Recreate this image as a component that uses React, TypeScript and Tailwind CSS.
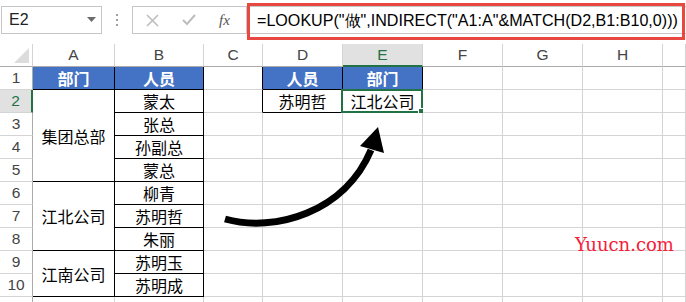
import React from "react";

type Cell = {
  text?: string;
  span?: number;
  blue?: boolean;
  blackR?: boolean;
  blackB?: boolean;
  selected?: boolean;
};

const colLetters = ["A", "B", "C", "D", "E", "F", "G", "H", ""];

function buildRows(): (Cell | null)[][] {
  const names = ["", "人员", "蒙太", "张总", "孙副总", "蒙总", "柳青", "苏明哲", "朱丽", "苏明玉", "苏明成"];
  const rows: (Cell | null)[][] = [];
  for (let r = 1; r <= 10; r++) {
    const row: (Cell | null)[] = [];
    if (r === 1) row.push({ text: "部门", blue: true, blackR: true, blackB: true });
    else if (r === 2) row.push({ text: "集团总部", span: 4, blackR: true, blackB: true });
    else if (r === 6) row.push({ text: "江北公司", span: 3, blackR: true, blackB: true });
    else if (r === 9) row.push({ text: "江南公司", span: 2, blackR: true, blackB: true });
    else row.push(null);
    row.push({ text: names[r], blue: r === 1, blackR: true, blackB: true });
    row.push({ blackR: r <= 2 });
    if (r === 1) row.push({ text: "人员", blue: true, blackR: true, blackB: true });
    else if (r === 2) row.push({ text: "苏明哲", blackR: true, blackB: true });
    else row.push({});
    if (r === 1) row.push({ text: "部门", blue: true, blackR: true, blackB: true });
    else if (r === 2) row.push({ text: "江北公司", blackR: true, blackB: true, selected: true });
    else row.push({});
    row.push({}, {}, {}, {});
    rows.push(row);
  }
  return rows;
}

function DataCell({ c }: { c: Cell }) {
  const span =
    c.span === 4 ? "row-span-4" : c.span === 3 ? "row-span-3" : c.span === 2 ? "row-span-2" : "";
  return (
    <div
      className={[
        "relative box-border flex items-center justify-center border-r border-b text-[16px] leading-none",
        span,
        c.blackR ? "border-r-black" : "border-r-[#d4d4d4]",
        c.blackB ? "border-b-black" : "border-b-[#d4d4d4]",
        c.blue ? "bg-[#4472c4] font-bold text-white" : "bg-white text-black",
      ].join(" ")}
      style={{ fontFamily: '"Noto Sans CJK SC", "Noto Sans", sans-serif' }}
    >
      {c.text}
      {c.selected && (
        <div className="absolute -left-[2px] -top-[1px] -right-[1px] -bottom-[1px] border-2 border-[#217346]">
          <div className="absolute -right-[4px] -bottom-[4px] h-[6px] w-[6px] bg-[#217346] outline outline-1 outline-white" />
        </div>
      )}
    </div>
  );
}

export default function App() {
  const rows = buildRows();
  return (
    <div
      className="relative h-[302px] w-[686px] overflow-hidden bg-white"
      style={{ fontFamily: '"Liberation Sans", Arial, sans-serif' }}
    >
      {/* Formula bar */}
      <div className="flex h-[44px] items-start">
        <div className="ml-[1px] mt-[6px] flex h-[28px] w-[101px] items-center justify-between border border-[#c6c6c6] pl-[7px] pr-[5px]">
          <span className="text-[16px] text-[#222]">E2</span>
          <svg width="9" height="6" viewBox="0 0 9 6">
            <path d="M0 0 L9 0 L4.5 5 Z" fill="#6b6b6b" />
          </svg>
        </div>
        <div className="flex h-[44px] w-[30px] flex-col items-center justify-start gap-[3px] pt-[14px]">
          <div className="h-[2px] w-[2px] bg-[#a0a0a0]" />
          <div className="h-[2px] w-[2px] bg-[#a0a0a0]" />
          <div className="h-[2px] w-[2px] bg-[#a0a0a0]" />
        </div>
        <div className="mt-[6px] flex h-[28px] flex-1 items-center border border-[#c6c6c6] border-r-0">
          <div className="flex h-full w-[114px] items-center border-r border-[#c6c6c6]">
            <svg className="ml-[13px]" width="13" height="13" viewBox="0 0 13 13">
              <path d="M1 1 L12 12 M12 1 L1 12" stroke="#bdbdbd" strokeWidth="1.6" />
            </svg>
            <svg className="ml-[23px]" width="14" height="12" viewBox="0 0 14 12">
              <path d="M1 6 L5 10 L13 1" stroke="#bdbdbd" strokeWidth="2" fill="none" />
            </svg>
            <span
              className="ml-[23px] text-[15px] italic text-[#555]"
              style={{ fontFamily: '"Liberation Serif", serif' }}
            >
              fx
            </span>
          </div>
          <span className="ml-[10px] whitespace-nowrap text-[16.1px] text-black">
            =LOOKUP("做",INDIRECT("A1:A"&amp;MATCH(D2,B1:B10,0)))
          </span>
        </div>
      </div>
      {/* red annotation box */}
      <div className="absolute left-[247px] top-[3px] h-[37px] w-[438px] border-[3px] border-[#e8483f]" />

      {/* Grid */}
      <div className="grid grid-cols-[33px_82px_89px_59px_80px_80px_80px_80px_80px_23px] grid-rows-[repeat(11,23px)_5px]">
        <div className="relative border-r border-b border-r-[#d4d4d4] border-b-[#ababab] bg-white">
          <svg className="absolute left-0 top-0" width="33" height="23" viewBox="0 0 33 23">
            <path d="M14 19 L29 19 L29 4 Z" fill="#dcdcdc" />
          </svg>
        </div>
        {colLetters.map((l, i) => (
          <div
            key={i}
            className={
              l === "E"
                ? "flex items-center justify-center border-r border-r-[#d4d4d4] border-b-2 border-b-[#217346] bg-[#e1e1e1] text-[15.5px] text-[#217346]"
                : "flex items-center justify-center border-r border-b border-r-[#d4d4d4] border-b-[#ababab] bg-white text-[15.5px] text-[#444]"
            }
          >
            {l}
          </div>
        ))}
        {rows.map((row, ri) => (
          <React.Fragment key={ri}>
            <div
              className={
                ri === 1
                  ? "flex items-center justify-center border-b border-b-[#d4d4d4] border-r-2 border-r-[#217346] bg-[#e1e1e1] text-[15.5px] text-[#217346]"
                  : "flex items-center justify-center border-b border-r border-b-[#d4d4d4] border-r-[#ababab] bg-white text-[15.5px] text-[#444]"
              }
            >
              {ri + 1}
            </div>
            {row.map((c, ci) => (c ? <DataCell key={ci} c={c} /> : null))}
          </React.Fragment>
        ))}
        <div className="border-r border-r-[#ababab]" />
        {[0, 1, 2, 3, 4, 5, 6, 7, 8].map((i) => (
          <div key={i} className="border-r border-r-[#d4d4d4]" />
        ))}
      </div>

      {/* curved arrow */}
      <svg className="pointer-events-none absolute left-0 top-0" width="686" height="302" viewBox="0 0 686 302">
        <path d="M225 219 C 275 233 345 212 371 150" stroke="#000" strokeWidth="7" fill="none" />
        <path d="M378 127 L360 146 L384 153 Z" fill="#000" />
      </svg>

      {/* watermark */}
      <div
        className="absolute left-[575px] top-[236px] text-[18px] leading-none text-[#f5203a]"
        style={{ fontFamily: '"DejaVu Serif", serif' }}
      >
        Yuucn.com
      </div>
    </div>
  );
}
